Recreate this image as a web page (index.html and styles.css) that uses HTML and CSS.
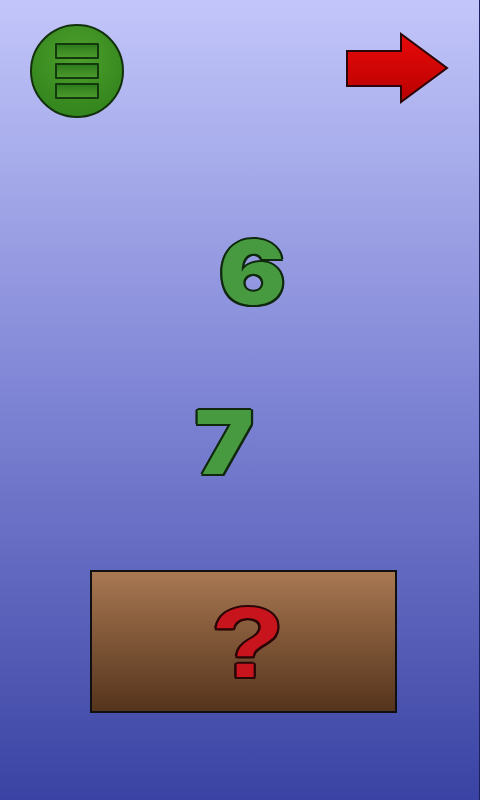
FILE: index.html
```html
<!DOCTYPE html>
<html>
  <head>
    <title>Number Game</title>
    <link rel="stylesheet" href="styles.css">
  </head>
  <body>
    <div class="screen">
      <div class="top">
        <button class="menu">
          <span class="bar"></span>
          <span class="bar"></span>
          <span class="bar"></span>
        </button>
        <button class="next">
          <svg width="104" height="72" viewBox="0 0 104 72">
            <defs>
              <linearGradient id="red" x1="0" y1="0" x2="0" y2="1">
                <stop offset="0" stop-color="#e80a0a"/>
                <stop offset="1" stop-color="#b80000"/>
              </linearGradient>
            </defs>
            <polygon points="2,19 56,19 56,2 102,36 56,70 56,54 2,54" fill="url(#red)" stroke="#2a0606" stroke-width="2" stroke-linejoin="miter"/>
          </svg>
        </button>
      </div>

      <p class="num first">6</p>
      <p class="num second">7</p>

      <button class="answer">
        <span class="quest">?</span>
      </button>
    </div>
  </body>
</html>
```

FILE: styles.css
```css
body{
  margin: 0;
  font-family: Inter, "Liberation Sans", Arial, sans-serif;
}

.screen{
  width: 479px;
  height: 800px;
  border-right: 1px solid #1c2260;
  background: linear-gradient(#c2c6fa, #7e84d4 50%, #3a43a3);
  overflow: hidden;
}

.top{
  display: flex;
  justify-content: space-between;
  align-items: flex-start;
  padding: 24px 30px 0 30px;
  height: 105px;
}

.menu{
  width: 94px;
  height: 94px;
  border-radius: 50%;
  border: 2px solid #13300c;
  background: radial-gradient(circle at 50% 35%, #4fa02c, #34861e 75%);
  display: flex;
  flex-direction: column;
  align-items: center;
  justify-content: center;
  gap: 4px;
  padding: 0;
  cursor: pointer;
}

.bar{
  width: 40px;
  height: 12px;
  border: 2px solid #123a0c;
  border-radius: 1px;
  background: linear-gradient(#2e7c1c, #4a9a2c);
}

.next{
  background: transparent;
  border: none;
  padding: 0;
  margin-top: 8px;
  cursor: pointer;
}

.num{
  width: fit-content;
  margin: 0;
  font-family: Inter, sans-serif;
  font-size: 88px;
  font-weight: 900;
  line-height: 88px;
  color: #479a40;
  text-shadow:
    2px 0 #10290e, -2px 0 #10290e, 0 2px #10290e, 0 -2px #10290e,
    1.5px 1.5px #10290e, -1.5px 1.5px #10290e, 1.5px -1.5px #10290e, -1.5px -1.5px #10290e;
  transform: scaleX(1.12);
  transform-origin: left center;
}

.first{
  margin-top: 99px;
  margin-left: 219px;
}

.second{
  margin-top: 82px;
  margin-left: 195px;
}

.answer{
  display: flex;
  align-items: center;
  justify-content: center;
  margin: 84px 0 0 90px;
  width: 307px;
  height: 143px;
  border: 2px solid #101010;
  background: linear-gradient(#a87852, #7a5234 55%, #54341c);
  padding: 0 0 0 8px;
  cursor: pointer;
}

.quest{
  display: inline-block;
  font-family: "Liberation Sans", Arial, sans-serif;
  font-size: 100px;
  font-weight: bold;
  line-height: 1;
  color: #c8141c;
  text-shadow:
    2px 0 #2a0606, -2px 0 #2a0606, 0 2px #2a0606, 0 -2px #2a0606,
    1.5px 1.5px #2a0606, -1.5px 1.5px #2a0606, 1.5px -1.5px #2a0606, -1.5px -1.5px #2a0606;
  transform: scaleX(1.2);
}
```
